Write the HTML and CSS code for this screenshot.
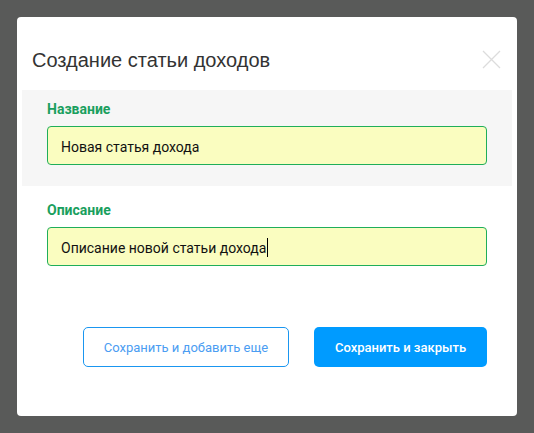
FILE: index.html
```html
<!DOCTYPE html>
<html lang="ru">
<head>
<meta charset="utf-8">
<title>Создание статьи доходов</title>
<link rel="stylesheet" href="styles.css">
</head>
<body>
<div class="modal">
  <div class="modal-header">
    <h2 class="modal-title">Создание статьи доходов</h2>
    <button class="close" aria-label="Закрыть">
      <svg width="19" height="19" viewBox="0 0 19 19"><path d="M1 1L18 18M18 1L1 18" stroke="#dcdcdc" stroke-width="1.3" fill="none"/></svg>
    </button>
  </div>
  <div class="field field-active">
    <div class="label">Название</div>
    <div class="input">Новая статья дохода</div>
  </div>
  <div class="field">
    <div class="label">Описание</div>
    <div class="input">Описание новой статьи дохода<span class="caret"></span></div>
  </div>
  <div class="actions">
    <button class="btn btn-outline">Сохранить и добавить еще</button>
    <button class="btn btn-primary">Сохранить и закрыть</button>
  </div>
</div>
</body>
</html>
```

FILE: styles.css
```css
html, body {
  margin: 0;
  height: 100%;
}
body {
  background: #595a59;
  padding: 17px;
  box-sizing: border-box;
  font-family: Roboto, "Noto Sans", sans-serif;
}
.modal {
  position: relative;
  width: 500px;
  height: 399px;
  background: #fff;
  border-radius: 4px;
  box-sizing: border-box;
}
.modal-header {
  padding: 31px 15px 18px;
}
.modal-title {
  margin: 0;
  font-family: "Liberation Sans", Arial, sans-serif;
  font-weight: 400;
  font-size: 20px;
  line-height: 24px;
  color: #333;
}
.close {
  position: absolute;
  top: 33px;
  right: 16px;
  padding: 0;
  border: 0;
  background: none;
  width: 19px;
  height: 19px;
}
.close svg { display: block; }
.field {
  margin: 0 5px;
  padding: 16px 25px 0;
}
.field-active {
  background: #f6f6f6;
  padding: 11px 25px 21px;
}
.label {
  font-weight: 700;
  font-size: 14px;
  line-height: 16px;
  color: #1a9f5e;
  margin-bottom: 9px;
}
.input {
  height: 39px;
  box-sizing: border-box;
  border: 1px solid #1fae5a;
  border-radius: 4px;
  background: #fafdc0;
  padding: 2px 13px 0;
  display: flex;
  align-items: center;
  font-size: 14px;
  color: #111;
}
.caret {
  display: inline-block;
  width: 1px;
  height: 19px;
  background: #000;
  margin-left: 1px;
}
.actions {
  display: flex;
  justify-content: flex-end;
  gap: 25px;
  padding: 61px 30px 0;
}
.btn {
  height: 40px;
  box-sizing: border-box;
  border-radius: 5px;
  font-family: Roboto, "Noto Sans", sans-serif;
  font-size: 13px;
  padding: 0;
  cursor: pointer;
}
.btn-outline {
  width: 206px;
  background: #fff;
  border: 1px solid #1a96f0;
  color: #4b9df2;
}
.btn-primary {
  width: 173px;
  background: #009bff;
  border: 0;
  color: #fff;
  font-weight: 500;
}
```
